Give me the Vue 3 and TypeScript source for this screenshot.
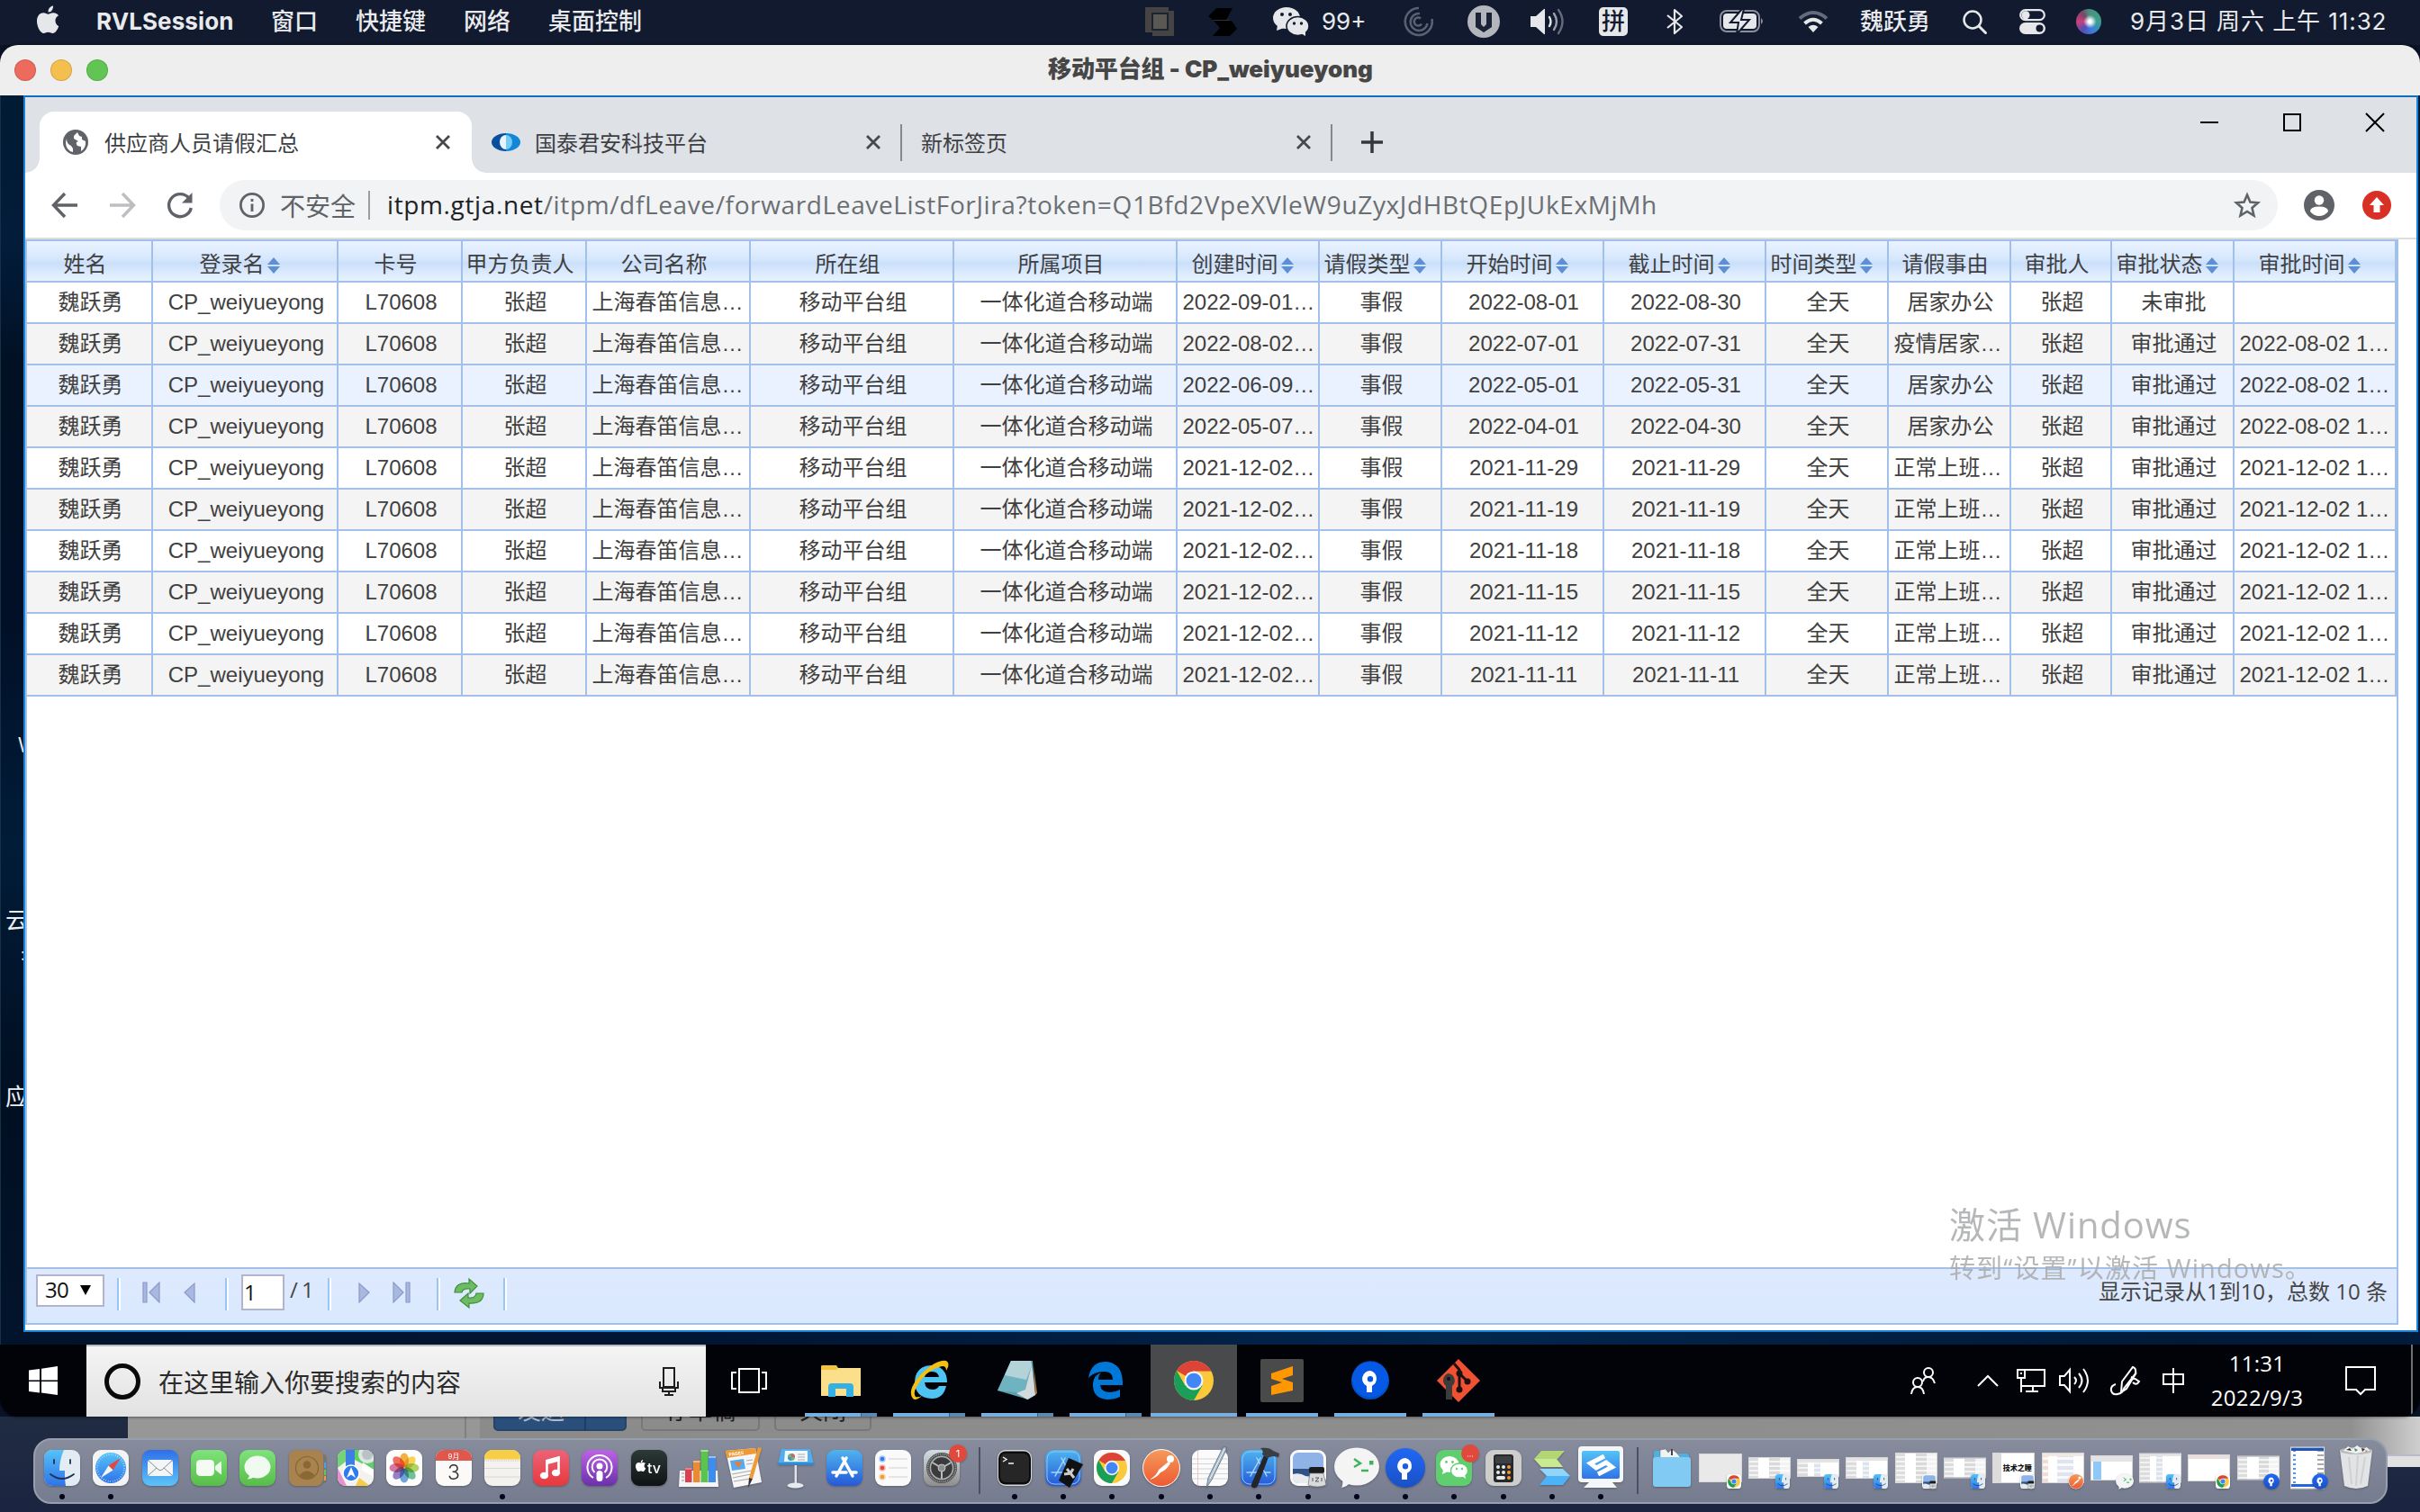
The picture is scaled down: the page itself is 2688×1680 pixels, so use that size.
<script setup lang="ts">
interface Column {
  title: string
  width: number
  sortable?: boolean
}
interface Thumb {
  w: number
  h: number
  badge: string
  kind: string
}

const columns: Column[] = [
  { title: '姓名', width: 140 },
  { title: '登录名', width: 206, sortable: true },
  { title: '卡号', width: 138 },
  { title: '甲方负责人', width: 138 },
  { title: '公司名称', width: 182 },
  { title: '所在组', width: 226 },
  { title: '所属项目', width: 248 },
  { title: '创建时间', width: 158, sortable: true },
  { title: '请假类型', width: 136, sortable: true },
  { title: '开始时间', width: 180, sortable: true },
  { title: '截止时间', width: 180, sortable: true },
  { title: '时间类型', width: 136, sortable: true },
  { title: '请假事由', width: 136 },
  { title: '审批人', width: 112 },
  { title: '审批状态', width: 136, sortable: true },
  { title: '审批时间', width: 180, sortable: true },
]
const gridColumns = columns.map((c) => c.width + 'px').join(' ')

const leaves: string[][] = [
  ['2022-09-01…', '2022-08-01', '2022-08-30', '居家办公', '未审批', ''],
  ['2022-08-02…', '2022-07-01', '2022-07-31', '疫情居家…', '审批通过', '2022-08-02 1…'],
  ['2022-06-09…', '2022-05-01', '2022-05-31', '居家办公', '审批通过', '2022-08-02 1…'],
  ['2022-05-07…', '2022-04-01', '2022-04-30', '居家办公', '审批通过', '2022-08-02 1…'],
  ['2021-12-02…', '2021-11-29', '2021-11-29', '正常上班…', '审批通过', '2021-12-02 1…'],
  ['2021-12-02…', '2021-11-19', '2021-11-19', '正常上班…', '审批通过', '2021-12-02 1…'],
  ['2021-12-02…', '2021-11-18', '2021-11-18', '正常上班…', '审批通过', '2021-12-02 1…'],
  ['2021-12-02…', '2021-11-15', '2021-11-15', '正常上班…', '审批通过', '2021-12-02 1…'],
  ['2021-12-02…', '2021-11-12', '2021-11-12', '正常上班…', '审批通过', '2021-12-02 1…'],
  ['2021-12-02…', '2021-11-11', '2021-11-11', '正常上班…', '审批通过', '2021-12-02 1…'],
]
const rows: string[][] = leaves.map(([created, start, end, reason, status, approved]) => [
  '魏跃勇', 'CP_weiyueyong', 'L70608', '张超', '上海春笛信息…', '移动平台组', '一体化道合移动端',
  created, '事假', start, end, '全天', reason, '张超', status, approved,
])

const tile = (fill: string) => `<rect width="40" height="40" rx="9" fill="${fill}"/>`
const chrome = (cx: number, cy: number, r: number) => `<g transform="translate(${cx} ${cy}) scale(${r / 20})">
  <circle r="20" fill="#fbc939"/>
  <path d="M0 0L-17.3 -10A20 20 0 0 1 17.3 -10L0 -10Z" fill="#db4437"/>
  <path d="M-17.3 -10A20 20 0 0 0 0 20L8.7 5L-8.7 5Z" fill="#1a9f59"/>
  <path d="M0 -10H17.3" stroke="#db4437" stroke-width="1"/>
  <circle r="9.6" fill="#f4f4f4"/><circle r="7.6" fill="#4285f4"/></g>`
const pin = `<path d="M20 9a9 9 0 0 0-4 17v7h6v-7.200a9 9 0 0 0-2-16.800zm0 6a3.200 3.200 0 1 1 0 6.400 3.200 3.200 0 0 1 0-6.400z" fill="#fff" fill-rule="evenodd"/>`
const strut = `<g stroke-linecap="round" fill="none"><path d="M22 9L11 29M18 9l11 20M7 25h15M27 25h6" /></g>`

const icons: Record<string, string> = {
  finder: `<clipPath id="cf"><rect width="40" height="40" rx="9"/></clipPath><g clip-path="url(#cf)"><rect width="40" height="40" fill="#e3ebf3"/><path d="M0 0h22q-5 11-5 23h6q-.5 9 1 17H0z" fill="url(#gBlue)"/></g><path d="M11 11v4M29 11v4" stroke="#1d3355" stroke-width="1.800" stroke-linecap="round"/><path d="M7 27q13 10 26 0" fill="none" stroke="#1d3355" stroke-width="1.800" stroke-linecap="round"/>`,
  safari: `${tile('#f4f4f4')}<circle cx="20" cy="20" r="17" fill="url(#gBlue)"/><circle cx="20" cy="20" r="15" fill="none" stroke="#cfe8fb" stroke-width="2" stroke-dasharray=".6 2"/><path d="M31 9L22.500 22.500 17.500 17.500z" fill="#e8463d"/><path d="M9 31L17.500 17.500 22.500 22.500z" fill="#f4f4f4"/>`,
  mail: `${tile('url(#gMail)')}<rect x="6" y="11" width="28" height="18" rx="3" fill="#f3f5f7"/><path d="M7 12l11 10q2 1.500 4 0l11-10M7 28l9-8M33 28l-9-8" fill="none" stroke="#8a9099" stroke-width="1"/>`,
  facetime: `${tile('url(#gGreen)')}<rect x="6" y="11" width="20" height="18" rx="4.500" fill="#f3fbf3"/><path d="M27 18l6-5q1-.5 1 .8v12.400q0 1.300-1 .8l-6-5z" fill="#eaf8ea"/>`,
  messages: `${tile('url(#gGreen)')}<ellipse cx="20" cy="19" rx="14.500" ry="12.500" fill="#f1faf0"/><path d="M11 27q0 4-2.500 5.500 5 0 8-3z" fill="#f1faf0"/>`,
  contacts: `<rect x="34" y="5" width="7" height="30" rx="2" fill="#777"/><path d="M39 14h2v6h-2z" fill="#4aa3e8"/><path d="M39 22h2v6h-2z" fill="#67c35b"/><path d="M39 29h2v5h-2z" fill="#e89c3c"/><rect width="38" height="40" rx="8" fill="#a9834f"/><circle cx="20" cy="20" r="12.500" fill="none" stroke="#86642f" stroke-width="1.200"/><circle cx="20" cy="16.500" r="4.300" fill="#8a6833"/><path d="M11.500 28q8.500-9 17 0-8.500 8-17 0z" fill="#8a6833"/>`,
  maps: `<clipPath id="cm"><rect width="40" height="40" rx="9"/></clipPath><g clip-path="url(#cm)"><rect width="40" height="40" fill="#f3f2ee"/><path d="M19 0h21v22L19 11z" fill="#62cf66"/><path d="M0 4v16l9-7V0H6z" fill="#74d376"/><circle cx="33" cy="5" r="10" fill="#dde6e2"/><circle cx="33" cy="5" r="6" fill="#b9c2c6"/><path d="M0 20v20h10z" fill="#e88fd0"/><path d="M20 40l4-9 12 9z" fill="#f8cb48"/><path d="M26 22l14 8v-8L28 14z" fill="#fff"/><path d="M9 0h10v22H9z" fill="#3b7fe4"/></g><circle cx="15" cy="26" r="9" fill="#2f7bf0" stroke="#fff" stroke-width="1.500"/><path d="M15 19l5 12-5-3.500L10 31z" fill="#fff"/>`,
  photos: `${tile('#fdfdfd')}<g opacity=".88">${['#f5a623', '#f4d03a', '#a8ce4b', '#5bb98b', '#5b9bd5', '#8a6fc4', '#d4668f', '#ee5b4b'].map((c, i) => `<ellipse cx="20" cy="11.500" rx="5" ry="8" fill="${c}" transform="rotate(${i * 45} 20 20)" style="mix-blend-mode:multiply"/>`).join('')}</g>`,
  calendar: `${tile('#fbfaf9')}<path d="M0 12V9a9 9 0 0 1 9-9h22a9 9 0 0 1 9 9v3z" fill="#e0574c"/><text x="20" y="9.500" font-size="8" text-anchor="middle" fill="#fff" font-family="Inter, 'Noto Sans CJK SC', sans-serif">9月</text><text x="20" y="33" font-size="23" text-anchor="middle" fill="#333" font-family="Inter, sans-serif" font-weight="300">3</text>`,
  notes: `${tile('#f4f2ee')}<path d="M0 10.500V9a9 9 0 0 1 9-9h22a9 9 0 0 1 9 9v1.500z" fill="#f8ce47"/><path d="M0 12h40" stroke="#c9c5bd" stroke-dasharray="1 1"/><path d="M0 20.500h40M0 30h40" stroke="#d4d0c9" stroke-width=".8"/>`,
  music: `${tile('url(#gRed)')}<path d="M15.500 28V12l13-3.500v17" fill="none" stroke="#fff" stroke-width="2.600"/><path d="M14.500 11.500l15-4v5l-15 4z" fill="#fff"/><ellipse cx="12.500" cy="28.500" rx="4.600" ry="3.800" fill="#fff"/><ellipse cx="25.500" cy="25.500" rx="4.600" ry="3.800" fill="#fff"/>`,
  podcasts: `${tile('url(#gPurple)')}<g fill="none" stroke="#fff" stroke-width="2"><path d="M13 31a13.500 13.500 0 1 1 14 0"/><path d="M14.500 25a8.300 8.300 0 1 1 11 0"/></g><circle cx="20" cy="18" r="3.500" fill="#fff"/><rect x="16.500" y="23" width="7" height="12" rx="3.500" fill="#fff"/>`,
  tv: `${tile('url(#gDark)')}<g transform="translate(5 12) scale(.48)"><path d="M20 12c0-4 3-5.500 3-5.500C21 4 18.500 4 17 4c-2 0-3.500 1.200-5 1.200S8.500 4 7 4C3 4 0 7.500 0 13c0 6 4 12 7 12 2 0 2.500-1.200 5-1.200S15 25 17 25c3 0 6-6 6.500-7.500C23 17.500 20 16 20 12zM16 2c1-1.500 1-3.500 1-4-2 0-5 2-5 6 2 0 3.500-1 4-2z" fill="#fff"/></g><text x="18" y="25.500" font-size="16" fill="#fff" font-family="Inter, sans-serif" font-weight="500">tv</text>`,
  numbers: `<path d="M0 23h42l1 18H-1z" fill="#f5f5f5"/><path d="M2 26h3M2 30h3M2 34h3" stroke="#999"/><rect x="6" y="20" width="7.500" height="16" fill="#d9434f"/><rect x="15" y="12" width="7.500" height="24" fill="#e98b35"/><rect x="23.500" y="0" width="8" height="36" fill="#5bc44f"/><rect x="32" y="7" width="8" height="29" fill="#3d8cf0"/><path d="M6 20h7.500v2H6z" fill="#ef7f86"/><path d="M15 12h7.500v2H15z" fill="#f7b878"/><path d="M23.500 0h8v2h-8z" fill="#a0e59a"/><path d="M32 7h8v2h-8z" fill="#8fc3fa"/>`,
  pages: `<path d="M-3 1L30-2l7 38-31 6z" fill="#f7f7f7"/><path d="M-3 1L30-2l1 6-33 5z" fill="#f09a37"/><text x="0" y="7" font-size="5" transform="rotate(-7)" fill="#fff" font-family="Inter, sans-serif" font-weight="700">PAGES</text><path d="M2 12l15-2 2 11-15 2z" fill="#55aaf5"/><path d="M6 14l9-1-3 7z" fill="#ee7b2e"/><path d="M20 12l7-1M20 16l7-1M4 27l22-4M5 31l20-4M6 35l18-3" stroke="#aaa" stroke-width="1.200"/><path d="M33-3l4 1L27 32l-4-1z" fill="#f09a37"/><path d="M23 31l4 1-5 10z" fill="#333"/>`,
  keynote: `<path d="M4-1h32l4 17H0z" fill="#53aeef"/><path d="M0 14h40v2.500H0z" fill="#2f8fdf"/><path d="M8 1h25v12H7z" fill="#f5f8fb"/><circle cx="15" cy="8" r="4" fill="#60c060"/><path d="M15 8V4a4 4 0 0 1 4 4z" fill="#e8508c"/><path d="M15 8h-4a4 4 0 0 0 4 4z" fill="#3e8ff0"/><path d="M22 5h8M22 8h8M22 11h8" stroke="#aaa"/><path d="M18.500 17h2.500v22h-2.500z" fill="#dfe3ea"/><ellipse cx="19.500" cy="39.500" rx="9" ry="3" fill="#e5eaf0"/>`,
  appstore: `${tile('url(#gStore)')}<g stroke="#fff" stroke-width="3.500">${strut}</g>`,
  reminders: `${tile('#fafafa')}<circle cx="8" cy="10" r="3" fill="#2f7bf0" stroke="#a9c9f8" stroke-width="1.500"/><circle cx="8" cy="20" r="3" fill="#e3493f" stroke="#f1b6b2" stroke-width="1.500"/><circle cx="8" cy="30" r="3" fill="#eb9c3e" stroke="#f6d5aa" stroke-width="1.500"/><path d="M15 10h21M15 20h21M15 30h21" stroke="#cfcfcf" stroke-width="1.200"/>`,
  settings: `${tile('url(#gGrey)')}<circle cx="20" cy="20" r="17" fill="#4a4b4c"/><circle cx="20" cy="20" r="15.500" fill="none" stroke="#a2a4a5" stroke-dasharray="1 .9" stroke-width="1.600"/><circle cx="20" cy="20" r="12.600" fill="#3a3b3c" stroke="#a9abac" stroke-width="1.600"/><path d="M20 20L9.500 14M20 20v12M20 20l10.500-6" stroke="#b9bbbc" stroke-width="2"/><circle cx="20" cy="20" r="4" fill="#8d8f90" stroke="#c4c6c7"/><circle cx="38" cy="4" r="10" fill="#e2493d"/><text x="38" y="8" font-size="11" text-anchor="middle" fill="#fff" font-family="Inter, sans-serif">1</text>`,
  terminal: `<rect x="1" width="38" height="40" rx="9" fill="#d7dadd"/><rect x="2" y="1.500" width="36" height="37" rx="8" fill="#0b0b0b"/><rect x="4" y="4" width="32" height="32" rx="6" fill="#262626"/><path d="M7 8l4 2.500L7 13M13 15h6" fill="none" stroke="#f4f4f4" stroke-width="1.400"/>`,
  simulator: `${tile('url(#gStore)')}<rect x="2" y="2" width="36" height="36" rx="8" fill="none" stroke="#8fc8f7"/><g stroke="#a7d5fa" stroke-width="1.500">${strut}</g><path d="M26 9l16 7-15 26-12-8z" fill="#111"/><path d="M24 21l8 10M31 21l-3 5-7 1" stroke="#ccc" stroke-width="3" fill="none"/>`,
  chrome: `${tile('#fafafa')}${chrome(20, 20, 17)}`,
  postman: `<circle cx="20" cy="20" r="21" fill="#fff"/><circle cx="20" cy="20" r="20" fill="url(#gOrange)"/><circle cx="30" cy="10" r="4" fill="#fff"/><path d="M28 13L17 22q-2 6-10 11 8-2 12-8 6-2 11-10z" fill="#fff"/>`,
  textedit: `${tile('#fbfbfb')}<path d="M0 10h40M0 15.500h40M0 21h40M0 26.500h40M0 32h40" stroke="#c9cbcd" stroke-width=".8"/><path d="M6.500 0v40" stroke="#f0b9b4" stroke-width=".8"/><path d="M34-2q2-2.500 4-1l0 3L22 33l-6 9 2-11z" fill="#a9bccb" stroke="#5c6d7a" stroke-width=".8"/><path d="M36-1L20 32" stroke="#eef4f8" stroke-width="1"/>`,
  xcode: `${tile('url(#gStore)')}<rect x="2" y="2" width="36" height="36" rx="8" fill="none" stroke="#8fc8f7"/><g stroke="#a7d5fa" stroke-width="1.500">${strut}</g><path d="M26 6l5 2-12 32q-2 3-5 2t-2-4z" fill="#23252a"/><path d="M22-2q10-1 14 3l7 3-1 4-6-1-7 2-5-4q2-4-2-7z" fill="#3a3d42"/>`,
  preview: `${tile('#fafafa')}<rect x="3" y="3" width="34" height="34" rx="6" fill="#8fb3e6"/><path d="M3 21h34v8H3z" fill="#2f5387"/><path d="M3 27q8-2 14 2t20 0v2a6 6 0 0 1-6 6H9a6 6 0 0 1-6-6z" fill="#e8ecef"/><rect x="21" y="19" width="17" height="7" rx="2" fill="#1b1b1b"/><path d="M22 26h15l3 13q-10 4-20 0z" fill="#d8dadb" stroke="#777" stroke-width=".7"/><path d="M25 35v-4M28 31h4l-4 4h4M35 31v4" stroke="#555" fill="none"/>`,
  script: `<ellipse cx="20" cy="18.500" rx="25" ry="21" fill="#f4f4f4"/><path d="M4 33q1 6-1 9 6-1 9-5z" fill="#f4f4f4"/><path d="M17 10l7 5-7 4" fill="none" stroke="#3cb55a" stroke-width="2.500"/><path d="M25 23h8" stroke="#3cb55a" stroke-width="2.500"/><rect x="34" y="12" width="4.500" height="4.500" fill="#3cb55a"/>`,
  sourcetree: `<circle cx="20" cy="20" r="22" fill="url(#gTree)"/>${pin}`,
  wechat: `${tile('#5fce6f')}<ellipse cx="15" cy="16" rx="10.500" ry="9" fill="#fff"/><path d="M8 22l-1 5 6-3z" fill="#fff"/><ellipse cx="26" cy="23" rx="9.500" ry="8" fill="#fff" stroke="#5fce6f" stroke-width="1.300"/><path d="M29 29l4 3-1-5z" fill="#fff"/><g fill="#5fce6f"><circle cx="11.500" cy="13.500" r="1.400"/><circle cx="18.500" cy="13.500" r="1.400"/><circle cx="23" cy="21" r="1.200"/><circle cx="29" cy="21" r="1.200"/></g><circle cx="38" cy="4" r="10" fill="#e2493d"/><g fill="#f6c9c5"><circle cx="35.500" cy="7" r=".7"/><circle cx="38" cy="7" r=".7"/><circle cx="40.500" cy="7" r=".7"/></g>`,
  calculator: `${tile('#cdcdcb')}<rect x="9" y="5" width="22" height="31" rx="3" fill="#26282b"/><rect x="11" y="7" width="18" height="8" rx="1" fill="#3c3f43"/><g fill="#e9e9e9"><circle cx="14" cy="19" r="2"/><circle cx="20" cy="19" r="2"/><circle cx="14" cy="25" r="2"/><circle cx="20" cy="25" r="2"/><rect x="12" y="29" width="10" height="4" rx="2"/></g><g fill="#f29a38"><circle cx="26" cy="19" r="2"/><circle cx="26" cy="25" r="2"/><circle cx="26" cy="31" r="2"/></g>`,
  stack: `<path d="M8 1h26l-8 9H0z" fill="#b3d574"/><path d="M0 10h25l7 9H8z" fill="#c8ea92"/><path d="M6 21h26l8 8H14z" fill="#8fd6fa"/><path d="M14 29h26l-8 10H6z" fill="#4db2f7"/>`,
  remote: `<rect x="-5" y="-4" width="50" height="40" rx="4" fill="#f5f6f7"/><rect x="-1" y="1" width="42" height="31" rx="2" fill="url(#gBlue)"/><path d="M7 36h26l5 6H1z" fill="#f5f6f7"/><path d="M24 7L8.500 15l6.500 5 11-6 6.500 5L17 27" fill="none" stroke="#fff" stroke-width="5"/>`,
  folder: `<path d="M0 4q0-3 3-3h9l3 3h21q3 0 3 3v6H0z" fill="#4fb0e2"/><path d="M7 9V0l6-1 3 4 4-4 5 4 5 6z" fill="#f0f2f4" stroke="#777" stroke-width=".6"/><path d="M19-1h2v7h-2z" fill="#444"/><rect x="-1" y="8" width="42" height="33" rx="3" fill="#81caf4"/>`,
}
const leftDock = ['finder', 'safari', 'mail', 'facetime', 'messages', 'contacts', 'maps', 'photos', 'calendar', 'notes', 'music', 'podcasts', 'tv', 'numbers', 'pages', 'keynote', 'appstore', 'reminders', 'settings']
const running = new Set(['finder', 'safari', 'notes'])
const midDock = ['terminal', 'simulator', 'chrome', 'postman', 'textedit', 'xcode', 'preview', 'script', 'sourcetree', 'wechat', 'calculator', 'stack', 'remote']
const thumbs: Thumb[] = [
  { w: 48, h: 32, badge: 'chrome', kind: 'blank' },
  { w: 47, h: 24, badge: 'finder', kind: 'split' },
  { w: 47, h: 20, badge: 'finder', kind: 'list' },
  { w: 47, h: 24, badge: 'finder', kind: 'list' },
  { w: 47, h: 34, badge: 'preview', kind: 'split' },
  { w: 47, h: 23, badge: 'finder', kind: 'split' },
  { w: 47, h: 34, badge: 'preview', kind: 'book' },
  { w: 47, h: 34, badge: 'postman', kind: 'api' },
  { w: 47, h: 28, badge: 'script', kind: 'code' },
  { w: 47, h: 33, badge: 'finder', kind: 'list' },
  { w: 47, h: 30, badge: 'chrome', kind: 'web' },
  { w: 47, h: 27, badge: 'sourcetree', kind: 'split' },
  { w: 38, h: 47, badge: 'sourcetree', kind: 'tall' },
]

const taskIcons: Record<string, string> = {
  explorer: `<g transform="translate(-2 2)"><path d="M0 3q0-2 2-2h13l3 3h26v31H0z" fill="#fbdf8b"/><path d="M0 3q0-2 2-2h15l2 3-2 2H0z" fill="#f5c33b"/><path d="M8 36V25q0-4 4-4h20q4 0 4 4v11h-8v-9H16v9z" fill="#36b0e4"/></g>`,
  ie: `<g transform="translate(-2 0)"><path d="M42 22H17q1 8 9 8 5 0 7-4h8q-3 14-16 14Q6 39 6 21 7 4 24 3q18 1 18 19zM17 16h16q-1-6-8-6-7 0-8 6z" fill="#4fc4f3"/><path d="M4 40Q-3 31 12 14 30-4 41-2q5 3 0 11 0-7-8-4Q18 9 8 27q-4 7-1 11 3 1 7-1-7 6-10 3z" fill="#f5c016"/></g>`,
  notepad: `<g transform="translate(-2 0)"><path d="M15-2h24l3 38-8 5L0 31z" fill="#5c9fae"/><path d="M15-2h22l1 6-8 30L0 31z" fill="#6fb3c1"/><path d="M15-2h22l1 5-6 16-24-5z" fill="#b4d3d9"/><path d="M38 3l4 33-9 5-12-7 10-4z" fill="#d3dadd"/><path d="M40 3l4 31-2 2z" fill="#a87c3f"/></g>`,
  edge: `<path d="M1 17Q4-1 20-1q18 1 19 22v4H14q1 8 11 8 6 0 11-3v8q-6 3-14 3Q5 40 6 23q1-9 9-12-3 3-3 8h16q0-9-9-9-12 0-18 7z" fill="#0078d7"/>`,
  chrome: chrome(20, 20, 22),
  sublime: `<rect x="-4" y="-4" width="48" height="48" rx="2" fill="#4a4a4a"/><path d="M8 12l24-8v10l-12 4 12 4v9L8 36V26l12-4-12-4z" fill="#ff9800"/>`,
  sourcetree: `<circle cx="20" cy="20" r="21" fill="#0052cc"/><circle cx="20" cy="18" r="20" fill="#0a5ff5" opacity=".6"/>${pin}`,
  git: `<path d="M20-4l24 24-24 24L-4 20z" fill="#f05133"/><path d="M15 1l6 7v22M21 12l9 9" stroke="#1b1110" stroke-width="3" fill="none"/><circle cx="21" cy="12" r="3.500" fill="#1b1110"/><circle cx="21" cy="30" r="3.500" fill="#1b1110"/><circle cx="30" cy="21" r="3.500" fill="#1b1110"/><path d="M9 12a8 8 0 0 0-3 14v15h7V26A8 8 0 0 0 9 12z" fill="#3c3c3c"/><circle cx="9" cy="18" r="2" fill="#111"/>`,
}
const tasks = [
  { id: 'explorer', multi: true },
  { id: 'ie', multi: true },
  { id: 'notepad', multi: true },
  { id: 'edge', multi: true },
  { id: 'chrome', active: true },
  { id: 'sublime' },
  { id: 'sourcetree' },
  { id: 'git' },
]
</script>

<template>
  <div class="screen">
    <svg class="defs" width="0" height="0">
      <defs>
        <linearGradient id="gBlue" x2="0" y2="1"><stop stop-color="#55c3f8" /><stop offset="1" stop-color="#2f73e8" /></linearGradient>
        <linearGradient id="gMail" x2="0" y2="1"><stop stop-color="#2f6fe8" /><stop offset="1" stop-color="#5cc4f8" /></linearGradient>
        <linearGradient id="gGreen" x2="0" y2="1"><stop stop-color="#7fe27c" /><stop offset="1" stop-color="#57bd48" /></linearGradient>
        <linearGradient id="gRed" x2="0" y2="1"><stop stop-color="#ea6478" /><stop offset="1" stop-color="#e8383d" /></linearGradient>
        <linearGradient id="gPurple" x2="0" y2="1"><stop stop-color="#bd63e6" /><stop offset="1" stop-color="#6b30aa" /></linearGradient>
        <linearGradient id="gDark" x2="0" y2="1"><stop stop-color="#2c3a36" /><stop offset="1" stop-color="#101214" /></linearGradient>
        <linearGradient id="gStore" x2="0" y2="1"><stop stop-color="#4fb4ee" /><stop offset="1" stop-color="#2559d8" /></linearGradient>
        <linearGradient id="gGrey" x2="0" y2="1"><stop stop-color="#d3dee4" /><stop offset="1" stop-color="#8f8d8a" /></linearGradient>
        <linearGradient id="gOrange" x2="0" y2="1"><stop stop-color="#f59a5a" /><stop offset="1" stop-color="#ee5a32" /></linearGradient>
        <linearGradient id="gTree" x2="0" y2="1"><stop stop-color="#2068f5" /><stop offset="1" stop-color="#1a50c4" /></linearGradient>
      </defs>
    </svg>

    <header class="menubar">
      <div class="menu-left">
        <svg class="apple" viewBox="0 0 26 32"><path d="M21.500 17c0-4 3.300-5.500 3.500-5.700-2-2.800-5-3-6-3-2.500 0-4.300 1.400-5.500 1.400S10.500 8.300 8.300 8.300C4.500 8.300 1 11.500 1 17.500 1 24 5.200 31 8.500 31c2 0 2.800-1.200 5-1.200S16.500 31 18.500 31c3 0 5.700-4.500 6.800-8-.2 0-3.800-1.600-3.800-6zM17.500 5.800C19 4 19.200 1.500 19 .5c-2 0-5.500 2-5.500 7 2 .1 3.300-.7 4-1.700z" /></svg>
        <b>RVLSession</b><span>窗口</span><span>快捷键</span><span>网络</span><span>桌面控制</span>
      </div>
      <div class="menu-right">
        <svg style="width: 32px" viewBox="0 0 32 32"><path d="M0 0h26v4h6v28H8v-4H0z" fill="#454442" /><rect x="8" y="7" width="17" height="18" fill="#5a5854" stroke="#1c2232" stroke-width="2" /></svg>
        <svg style="width: 32px; margin-left: 38px" viewBox="0 0 32 32"><path d="M9 1h18l-7 13H5L0 10zM6 15h20l6 9-8 8H5l8-9z" /><path d="M6 14.500h18" stroke="#2a3142" /></svg>
        <svg style="width: 40px; margin-left: 40px" viewBox="0 0 40 32"><ellipse cx="15" cy="12" rx="15" ry="12" fill="#e6e7ea" /><path d="M5 20l-1 6 8-3z" fill="#e6e7ea" /><ellipse cx="27.500" cy="21" rx="12.500" ry="10.500" fill="#e6e7ea" stroke="#111a2e" stroke-width="1.600" /><path d="M31 29l5 3v-6z" fill="#e6e7ea" /><g fill="#111a2e"><circle cx="10" cy="8" r="2" /><circle cx="19" cy="8" r="2" /><circle cx="23.500" cy="18" r="1.700" /><circle cx="31.500" cy="18" r="1.700" /></g></svg>
        <span class="m99">99+</span>
        <svg style="width: 32px; margin-left: 44px" viewBox="0 0 32 32"><g fill="none" stroke="#596073" stroke-width="2.600"><path d="M16 1a15 15 0 1 0 14.500 12" /><path d="M17 7a9.500 9.500 0 1 0 8.500 11" /><path d="M18 12.500a4.500 4.500 0 1 0 1 6" /></g></svg>
        <svg style="width: 36px; margin-left: 38px" viewBox="0 0 36 36"><circle cx="18" cy="18" r="18" fill="#b3b6bd" /><path d="M9 8h6v13l3 3 3-3V8h6v16l-9 6-9-6z" fill="#1b2338" /></svg>
        <svg style="width: 38px; margin-left: 34px" viewBox="0 0 38 30"><path d="M0 9h6l9-8q1-.5 1 .6v26.800q0 1.100-1 .6L6 21H0z" fill="#e6e7ea" /><g fill="none" stroke-width="2.400" stroke-linecap="round"><path d="M21 10q3 5 0 10" stroke="#e6e7ea" /><path d="M26 6q6 9 0 18" stroke="#9ba0ab" /><path d="M31 2q9 13 0 26" stroke="#646b7c" /></g></svg>
        <span class="pin">拼</span>
        <svg style="width: 18px; margin-left: 43px" viewBox="0 0 18 28"><path d="M1 7l16 13-8 7V1l8 7L1 21" fill="none" stroke="#e6e7ea" stroke-width="2.200" stroke-linejoin="round" /></svg>
        <svg style="width: 50px; margin-left: 41px" viewBox="0 0 50 26"><rect x="1" y="1" width="43" height="23" rx="7" fill="none" stroke="#8b909c" stroke-width="2" /><rect x="4" y="4" width="37" height="17" rx="4" fill="#e6e7ea" /><path d="M46 9q4 3.500 0 7z" fill="#8b909c" /><path d="M25-1L12 14h9l-2 13 14-16h-9l3-12z" fill="#e6e7ea" stroke="#111a2e" stroke-width="2" /></svg>
        <svg style="width: 34px; margin-left: 37px" viewBox="0 0 34 24"><g fill="none" stroke-width="4"><path d="M2 8.500q15-13 30 0" stroke="#646b7c" /><path d="M7.500 14q9.500-8.500 19 0" stroke="#e6e7ea" /></g><path d="M11.500 18q5.500-4.500 11 0L17 24z" fill="#e6e7ea" /></svg>
        <span style="margin-left: 35px">魏跃勇</span>
        <svg style="width: 27px; margin-left: 36px" viewBox="0 0 27 27"><circle cx="11" cy="11" r="9.500" fill="none" stroke="#e6e7ea" stroke-width="2.500" /><path d="M18 18l7.500 7.500" stroke="#e6e7ea" stroke-width="3" stroke-linecap="round" /></svg>
        <svg style="width: 29px; margin-left: 36px" viewBox="0 0 29 28"><rect x="1.200" y="1.200" width="26.600" height="11" rx="5.500" fill="none" stroke="#e6e7ea" stroke-width="2.200" /><circle cx="7" cy="6.700" r="4.500" fill="#e6e7ea" /><rect y="15" width="29" height="13" rx="6.500" fill="#e6e7ea" /><circle cx="22.500" cy="21.500" r="4" fill="#111a2e" /></svg>
        <i class="siri"></i>
        <span class="date">9月3日 周六 上午 11:32</span>
      </div>
    </header>

    <main class="macwin">
      <div class="titlebar">
        <div class="lights"><i class="r"></i><i class="y"></i><i class="g"></i></div>
        <b>移动平台组 - CP_weiyueyong</b>
      </div>
      <div class="remote">
        <div class="wall-left">
          <span style="top: 703px; left: 19px; font-size: 24px">W</span>
          <span style="top: 898px; left: 5px">云</span>
          <span style="top: 936px; left: 22px; font-size: 18px">:</span>
          <span style="top: 1094px; left: 5px">应</span>
        </div>
        <div class="browser">
          <div class="tabs">
            <div class="tab on">
              <svg class="fav" viewBox="0 0 28 28"><circle cx="14" cy="14" r="14" fill="#5f6368" /><path d="M4 10q0 6 5 8l2 3v4Q3 23 3 14zM16 3l-4 4v3l5 3q-4 1-1 5l4 1v5q6-4 5-11l-4-2v-3l-3-1z" fill="#fff" /></svg>
              <span>供应商人员请假汇总</span>
              <svg class="x" viewBox="0 0 16 16"><path d="M1 1l14 14M15 1L1 15" /></svg>
            </div>
            <div class="tab">
              <svg class="fav2" viewBox="0 0 32 20"><path d="M16 0A16 10 0 0 0 16 20z" fill="#0a4f9e" /><path d="M16 0A16 10 0 0 1 16 20z" fill="#1286d8" /><path d="M16 2a7 8 0 0 0 0 16z" fill="#e8f3fb" /><path d="M16 2a7 8 0 0 1 0 16z" fill="#74cbf4" /></svg>
              <span>国泰君安科技平台</span>
              <svg class="x" viewBox="0 0 16 16"><path d="M1 1l14 14M15 1L1 15" /></svg>
            </div>
            <div class="tab plain">
              <span>新标签页</span>
              <svg class="x" viewBox="0 0 16 16"><path d="M1 1l14 14M15 1L1 15" /></svg>
            </div>
            <svg class="plus" viewBox="0 0 24 24"><path d="M12 0v24M0 12h24" /></svg>
            <div class="wctl">
              <svg viewBox="0 0 20 20"><path d="M0 10h20" /></svg>
              <svg viewBox="0 0 20 20"><rect x="1" y="1" width="18" height="18" /></svg>
              <svg viewBox="0 0 20 20"><path d="M0 0l20 20M20 0L0 20" /></svg>
            </div>
          </div>
          <div class="toolbar">
            <svg class="nav" viewBox="0 0 28 28"><path d="M28 14H2M14 1L1.500 14 14 27" /></svg>
            <svg class="nav dim" viewBox="0 0 28 28"><path d="M0 14h26M14 1l12.500 13L14 27" /></svg>
            <svg class="nav reload" viewBox="0 0 28 28"><path d="M24 6.500A12.500 12.500 0 1 0 26.300 17" /><path d="M27.500 0v11.500H16z" class="fill" /></svg>
            <div class="omni">
              <svg class="info" viewBox="0 0 28 28"><circle cx="14" cy="14" r="12.600" /><path d="M14 12.500V21M14 7v3" /></svg>
              <span class="unsafe">不安全</span><i></i>
              <span class="url"><em>itpm.gtja.net</em>/itpm/dfLeave/forwardLeaveListForJira?token=Q1Bfd2VpeXVleW9uZyxJdHBtQEpJUkExMjMh</span>
              <svg class="star" viewBox="0 0 28 28"><path d="M14 2.500l3.400 8 8.600.8-6.500 5.700 2 8.500-7.500-4.500-7.500 4.500 2-8.500L2 11.300l8.600-.8z" /></svg>
            </div>
            <svg class="avatar" viewBox="0 0 34 34"><circle cx="17" cy="17" r="17" fill="#5f6368" /><circle cx="17" cy="11.500" r="5.200" fill="#fff" /><path d="M7 24q0-5.500 10-5.500T27 24q-4 5-10 5T7 24z" fill="#fff" /></svg>
            <svg class="update" viewBox="0 0 32 32"><circle cx="16" cy="16" r="16" fill="#d93025" /><path d="M16 7l8 9h-4.500v8h-7v-8H8z" fill="#fff" /></svg>
          </div>
          <div class="page">
            <div class="grid">
              <div class="row head" :style="{ gridTemplateColumns: gridColumns }">
                <div v-for="c in columns" :key="c.title" class="cell">
                  <span>{{ c.title }}</span>
                  <svg v-if="c.sortable" class="sort" viewBox="0 0 14 18"><path d="M7 0l7 8H0zM0 10h14l-7 8z" /></svg>
                </div>
              </div>
              <div v-for="(r, i) in rows" :key="i" class="row" :class="{ alt: i % 2 === 1, hover: i === 2 }" :style="{ gridTemplateColumns: gridColumns }">
                <div v-for="(v, j) in r" :key="j" class="cell" :class="{ long: v.endsWith('…') }">{{ v }}</div>
              </div>
              <div class="empty"></div>
              <div class="pager">
                <div class="size">30<svg viewBox="0 0 12 11"><path d="M0 0h12L6 11z" /></svg></div>
                <s style="margin-left: 14px"></s>
                <svg style="width: 20px; margin-left: 24px" viewBox="0 0 20 24"><path d="M1 1h4v22H1zM19 1v22L8 12z" /></svg>
                <svg style="width: 13px; margin-left: 26px" viewBox="0 0 13 24"><path d="M12 2v21L1 12z" /></svg>
                <s style="margin-left: 33px"></s>
                <div class="num">1</div>
                <span class="of">/ 1</span>
                <s style="margin-left: 17px"></s>
                <svg style="width: 13px; margin-left: 30px" viewBox="0 0 13 24"><path d="M1 2v21l11-11z" /></svg>
                <svg style="width: 20px; margin-left: 25px" viewBox="0 0 20 24"><path d="M1 1v22l11-11zM15 1h4v22h-4z" /></svg>
                <s style="margin-left: 29px"></s>
                <svg class="refresh" viewBox="0 0 34 32"><path d="M1 15Q2 3 17 5V0l9 8-8 8v-5q-8-1-9 4z" /><path d="M33 16q0 12-16 11v5l-10-8 9-8v5q8 1 9-5z" /></svg>
                <s style="margin-left: 21px"></s>
                <span class="total">显示记录从1到10，总数 10 条</span>
              </div>
            </div>
            <div class="watermark"><p>激活 Windows</p><p>转到“设置”以激活 Windows。</p></div>
          </div>
        </div>
      </div>
      <div class="taskbar">
        <div class="start"><svg viewBox="0 0 32 32"><path d="M0 4.500L12 3v12.500H0zM14 2.700L32 0v15.500H14zM0 17h12v12.500L0 28zM14 17h18v15l-18-2.500z" fill="#fff" /></svg></div>
        <div class="search">
          <i></i><span>在这里输入你要搜索的内容</span>
          <svg viewBox="0 0 22 32"><path d="M5 1h12v21H5zM1 16v7h20v-7M4 23v4h14v-4M11 27v4M6 31h10" /></svg>
        </div>
        <svg class="views" viewBox="0 0 40 28"><path d="M9 1h22v26H9zM6 5H1v18h5M34 5h5v18h-5" /></svg>
        <div class="tasks">
          <div v-for="t in tasks" :key="t.id" class="task" :class="{ active: t.active, multi: t.multi }">
            <svg viewBox="0 0 40 40" v-html="taskIcons[t.id]"></svg>
          </div>
        </div>
        <div class="tray">
          <svg style="width: 30px" viewBox="0 0 30 30"><circle cx="21" cy="6" r="5" /><circle cx="9" cy="17" r="5" /><path d="M15 16q1-5 6-5t7 7M2 30q1-8 7-8t7 8" /></svg>
          <svg style="width: 24px; margin-left: 45px" viewBox="0 0 24 14"><path d="M1 13L12 2l11 11" /></svg>
          <svg style="width: 32px; margin-left: 20px" viewBox="0 0 32 28"><path d="M9 2h22v18H5M1 2h8v9H1zM5 11v16M18 20v6M10 26h14M4 6h2" /></svg>
          <svg style="width: 34px; margin-left: 15px" viewBox="0 0 34 28"><path d="M1 9h5l6-7v24l-6-7H1zM17 10q4 4 0 8M22 6q7 8 0 16M27 1q10 13 0 26" /></svg>
          <svg style="width: 34px; margin-left: 22px" viewBox="0 0 34 32"><path d="M7 20q-6 2-5 7t7 4 7-6l13-17q1-6-3-7L14 17l-1 12 6-4L30 7M24 12q6 2 9 5-3 5-7 1" /></svg>
          <svg style="width: 24px; margin-left: 25px" viewBox="0 0 24 28"><path d="M1 7h22v11H1zM12 0v28" /></svg>
          <div class="clock"><span>11:31</span><span>2022/9/3</span></div>
          <svg style="width: 34px; margin-left: 42px" viewBox="0 0 34 32"><path d="M1 1h32v25H22l-5 5-5-5H1z" /></svg>
          <i></i>
        </div>
      </div>
    </main>

    <footer class="behind">
      <div class="backpane">
        <div class="btn blue"><span>发送</span><u></u></div>
        <div class="btn b2"><span>存草稿</span></div>
        <div class="btn b3"><span>关闭</span></div>
      </div>
      <div class="dock">
        <div v-for="n in leftDock" :key="n" class="slot">
          <svg viewBox="0 0 40 40" v-html="icons[n]"></svg><i v-if="running.has(n)"></i>
        </div>
        <hr />
        <div v-for="n in midDock" :key="n" class="slot"><svg viewBox="0 0 40 40" v-html="icons[n]"></svg><i></i></div>
        <hr />
        <div class="slot"><svg viewBox="0 0 40 40" v-html="icons.folder"></svg></div>
        <div v-for="(t, i) in thumbs" :key="i" class="slot">
          <div class="thumb" :class="t.kind" :style="{ width: t.w + 'px', height: t.h + 'px' }"><b v-if="t.kind === 'book'">技术之瞳</b></div>
          <svg class="badge" viewBox="0 0 40 40" v-html="icons[t.badge]"></svg>
        </div>
        <div class="slot">
          <svg viewBox="0 0 40 40"><path d="M2 0h36l-5 40q-13 6-26 0z" fill="#e2e3e4" /><path d="M12 8l3 30M22 6l-2 34M30 8l-5 30" stroke="#cfd0d1" stroke-width="2" /><ellipse cx="20" cy="1" rx="18" ry="4" fill="#b9bcbe" /><path d="M6 1l5-5 5 3 5-4 6 4 5-2 3 4-15 3z" fill="#f1f1f1" /><path d="M9 0l4-2 2 3zM26-2l4 1-3 3z" fill="#333" /><path d="M18-2l4 2-3 2z" fill="#3c8f7a" /><path d="M30 0l3 1-2 2z" fill="#d4803a" /></svg>
        </div>
      </div>
    </footer>
  </div>
</template>

<style>
body { margin: 0; overflow: hidden; }
</style>
<style scoped>
.screen { width: 2688px; height: 1680px; display: flex; flex-direction: column; position: relative; overflow: hidden; background: #0a1226; font-family: "Open Sans", "Noto Sans CJK SC", sans-serif; box-sizing: border-box; }
.screen *, .screen *::before, .screen *::after { box-sizing: border-box; }
.defs { position: absolute; }
svg { display: block; overflow: visible; flex: none; }
span, b { white-space: nowrap; }

.menubar { height: 50px; flex: none; background: #111a2e; display: flex; justify-content: space-between; color: #e9eaed; font: 500 26px/48px Inter, "Noto Sans CJK SC", sans-serif; }
.menu-left, .menu-right { display: flex; align-items: center; height: 48px; }
.menu-left { padding-left: 40px; }
.menu-left span { margin-left: 42px; padding-bottom: 1px; }
.menu-left b { margin-left: 41px; font-weight: 700; width: 152px; letter-spacing: .1px; padding-bottom: 1px; }
.apple { width: 26px; fill: #e6e7ea; margin-bottom: 4px; }
.menu-right { padding-right: 34px; }
.m99 { margin-left: 14px; width: 48px; font-weight: 400; }
.pin { margin-left: 38px; width: 32px; height: 32px; line-height: 31px; border-radius: 5px; background: #e6e7ea; color: #111a2e; text-align: center; }
.siri { width: 28px; height: 28px; border-radius: 50%; margin-left: 34px; background: radial-gradient(circle at 55% 50%, #fff 0 8%, transparent 35%), conic-gradient(#4b8f7d, #3aa08d 25%, #3b7be0 45%, #5a4bb0 60%, #c7427a 75%, #7a4468 90%, #4b8f7d); }
.date { margin-left: 32px; width: 288px; letter-spacing: .92px; font-weight: 400; padding-bottom: 1px; }

.macwin { height: 1524px; flex: none; display: flex; flex-direction: column; border-radius: 20px; overflow: hidden; position: relative; z-index: 1; box-shadow: 0 0 3px 1px #0006; }
.titlebar { height: 56px; flex: none; background: #eee; position: relative; display: flex; align-items: center; justify-content: center; color: #464646; font: 700 26px/54px Inter, "Noto Sans CJK SC", sans-serif; }
.titlebar b { width: 360px; letter-spacing: -.1px; padding-bottom: 3px; }
.lights { position: absolute; left: 16px; top: 16px; display: flex; gap: 16px; }
.lights i { width: 24px; height: 24px; border-radius: 50%; border: 1px solid #0002; }
.r { background: #ed6a5e; } .y { background: #f5bf4f; } .g { background: #61c554; }
.remote { height: 1388px; display: flex; flex: none; background: linear-gradient(90deg, #02132b, #011634 30%, #02264d 60%, #011a38 90%, #011b3c); padding-right: 2px; }
.wall-left { width: 26px; height: 1388px; position: relative; overflow: hidden; background: linear-gradient(#011b33, #021c3a 12%, #011022 22%, #011027 42%, #011c38 60%, #010f22 80%, #02142c); border-left: 1px solid #16304a; }
.wall-left span { position: absolute; color: #eee; font-size: 26px; line-height: 36px; }

.browser { width: 2660px; height: 1374px; border: 2px solid #1883d7; border-top-color: #0f6fbd; display: flex; flex-direction: column; background: #fff; }
.tabs { height: 84px; flex: none; background: #dee1e6; padding: 16px 0 0 16px; display: flex; color: #3c4043; font-size: 24px; position: relative; }
.tab { position: relative; display: flex; align-items: center; height: 68px; width: 478px; padding: 0 24px 0 25px; }
.tab.on { background: #fff; border-radius: 16px 16px 0 0; width: 480px; padding-left: 26px; }
.tab.on::before, .tab.on::after { content: ""; position: absolute; bottom: 0; width: 16px; height: 16px; }
.tab.on::before { left: -16px; background: radial-gradient(circle at 0 0, transparent 15.500px, #fff 16px); }
.tab.on::after { right: -16px; background: radial-gradient(circle at 100% 0, transparent 15.500px, #fff 16px); }
.tab span { margin-left: 18px; padding-bottom: 2px; }
.tab:not(.on)::after { content: ""; position: absolute; right: 0; top: 14px; width: 2px; height: 41px; background: #85888d; }
.tab:not(.on, .plain) { padding-left: 22px; }
.tab.plain { padding-left: 21px; }
.tab.plain span { margin-left: 0; }
.fav { width: 28px; } .fav2 { width: 32px; } .fav2 + span { margin-left: 16px; }
.x { width: 16px; margin-left: auto; stroke: #45494d; stroke-width: 2.800; }
.plus { width: 24px; height: 24px; margin: 22px 0 0 32px; align-self: flex-start; stroke: #35383b; stroke-width: 3.500; }
.wctl { margin-left: auto; display: flex; gap: 72px; padding: 2px 36px 0 0; }
.wctl svg { width: 20px; height: 20px; fill: none; stroke: #000; stroke-width: 2; }
.toolbar { height: 74px; flex: none; padding: 8px 28px 0 30px; display: flex; border-bottom: 2px solid #dcdde0; }
.toolbar > svg { margin-top: 14px; }
.nav { width: 28px; height: 28px; fill: none; stroke: #5f6368; stroke-width: 3.400; margin-right: 36px; }
.nav.dim { stroke: #bcbec1; }
.nav.reload { margin-right: 30px; }
.nav .fill { fill: #5f6368; stroke: none; }
.omni { width: 2286px; height: 56px; border-radius: 28px; background: #f1f3f4; display: flex; align-items: center; padding: 0 20px 0 22px; font-size: 28px; color: #5f6368; }
.info { width: 28px; fill: none; stroke: #5f6368; stroke-width: 2.800; }
.unsafe { margin-left: 17px; width: 86px; padding-bottom: 1px; }
.omni i { width: 2px; height: 32px; background: #9a9da1; margin-left: 12px; }
.url { margin-left: 19px; color: #6b6f74; letter-spacing: .63px; padding-bottom: 2px; }
.url em { font-style: normal; color: #202124; }
.star { width: 28px; margin-left: auto; fill: none; stroke: #5f6368; stroke-width: 2.600; }
.avatar { width: 34px; height: 34px; margin: 11px 0 0 29px !important; }
.update { width: 32px; height: 32px; margin: 12px 0 0 auto !important; }

.page { height: 1212px; position: relative; background: #fff; }
.grid { width: 2636px; height: 1206px; border: 2px solid #a3c0e8; display: flex; flex-direction: column; font: 24px/44px "Liberation Sans", "Noto Sans CJK SC", sans-serif; color: #404040; }
.row { display: grid; height: 46px; flex: none; border-bottom: 2px solid #a3c0e8; background: #fff; }
.row.alt { background: #f4f4f4; }
.row.hover { background: #eaf2ff; }
.cell { border-right: 2px solid #a3c0e8; padding-left: 3px; text-align: center; white-space: nowrap; overflow: hidden; height: 44px; line-height: 43px; }
.cell.long { text-align: left; padding-left: 5.500px; }
.head { background: linear-gradient(#eaf3ff, #d6e7fd 45%, #cadffa 55%, #e6f1ff 95%); }
.head .cell { display: flex; justify-content: center; align-items: center; padding: 8px 9px 0 0; line-height: 36px; overflow: visible; }
.sort { width: 14px; height: 18px; margin: 1px 3px 0 3px; fill: #5e8fd3; }
.empty { flex: 1; }
.pager { height: 62px; border-top: 2px solid #a3c0e8; flex: none; display: flex; padding: 0 10px; background: linear-gradient(#dee9fd, #d9e9ff); font-family: "Open Sans", "Noto Sans CJK SC", sans-serif; color: #444; align-items: flex-start; }
.size { width: 76px; height: 36px; margin-top: 6px; border: 2px solid #b0b4cc; background: #fff; color: #111; line-height: 29px; padding-left: 8px; display: flex; letter-spacing: -.6px; }
.size svg { width: 12px; height: 11px; margin: 10px 0 0 13px; }
.pager s { width: 4px; height: 36px; margin-top: 10px; background: linear-gradient(90deg, #99c6f8 50%, #fff 50%); }
.pager > svg { margin-top: 14px; fill: #a9b8e0; stroke: #8c9ac6; stroke-width: 1.200; }
.num { width: 48px; height: 40px; margin: 6px 0 0 14px; border: 2px solid #b0b4cc; background: #fff; line-height: 35px; padding-left: 1px; color: #111; }
.of { margin: 1px 0 0 6px; width: 25px; line-height: 44px; letter-spacing: -1px; }
.pager .refresh { width: 34px; margin: 11px 0 0 15px; fill: #6dbb62; stroke: #3f8f3c; }
.total { margin-left: auto; line-height: 49px; }
.watermark { position: absolute; left: 2137px; top: 1066px; color: #a9abad; opacity: .85; pointer-events: none; }
.watermark p { margin: 0; font-size: 40px; line-height: 57px; letter-spacing: .9px; white-space: nowrap; }
.watermark p + p { font-size: 29px; line-height: 40px; letter-spacing: 1.100px; }

.taskbar { height: 80px; flex: none; background: #010308; display: flex; color: #fff; }
.start { width: 96px; padding: 24px 32px; }
.start svg { width: 32px; }
.search { width: 688px; background: linear-gradient(#f4f4f4, #e2e2e2); border-top: 2px solid #b9bbbd; display: flex; align-items: center; padding: 0 30px 0 20px; color: #2b2b2b; font-size: 28px; }
.search i { width: 40px; height: 40px; border: 5px solid #0a0a0a; border-radius: 50%; }
.search span { margin-left: 20px; }
.search svg { width: 22px; margin-left: auto; fill: none; stroke: #1e1e1e; stroke-width: 2; }
.views { width: 40px; height: 28px; margin: 26px 0 0 28px; fill: none; stroke: #fff; stroke-width: 2; }
.tasks { display: flex; margin-left: 34px; }
.task { width: 96px; height: 80px; margin-right: 2px; display: flex; justify-content: center; padding-top: 20px; position: relative; }
.task svg { width: 40px; height: 40px; }
.task::after { content: ""; position: absolute; left: 8px; right: 8px; bottom: 0; height: 4px; background: #76b0e2; }
.task.multi::after { background: linear-gradient(90deg, #76b0e2 62px, #3f617e 62px 63px, #5a8ab2 63px); }
.task.active { background: #484a4c; }
.task.active::after { left: 0; right: 0; }
.tray { margin-left: auto; display: flex; align-items: center; }
.tray svg { fill: none; stroke: #fff; stroke-width: 2; }
.tray > i { width: 2px; height: 80px; background: #6e6f71; margin: 0 8px 0 39px; }
.clock { width: 112px; margin-left: 25px; display: flex; flex-direction: column; text-align: center; font-size: 24px; line-height: 38px; letter-spacing: .3px; align-items: center; }

.behind { height: 106px; flex: none; position: relative; z-index: 0; background: linear-gradient(#202c42, #1b2440); }
.backpane { position: absolute; left: 142px; right: 0; top: 0; height: 42px; background: linear-gradient(90deg, #979797 374px, #808080 374px 376px, #979797 376px 391px, #8b8b8b 391px, #909090 97%, #cfcfcf); overflow: hidden; box-shadow: 0 2px #b9bcc6, 0 14px #e1e1e1; }
.btn { position: absolute; top: -40px; height: 56px; border: 2px solid #777; border-radius: 5px; font-size: 26px; color: #222; text-align: center; line-height: 62px; }
.blue { left: 406px; width: 148px; background: #2b4f7b; border-color: #254468; color: #b6bcc4; padding-right: 42px; }
.blue u { position: absolute; right: 43px; top: 0; width: 2px; height: 54px; background: #1f3d62; }
.b2 { left: 570px; width: 132px; } .b3 { left: 718px; width: 108px; }

.dock { position: absolute; left: 37px; top: 24px; width: 2615px; height: 73px; border: 2px solid #979ead; border-radius: 20px; background: linear-gradient(#868c9c, #767c8f); display: flex; padding-left: 3px; }
.slot { width: 54.300px; flex: none; height: 69px; position: relative; display: flex; justify-content: center; align-items: flex-start; padding-top: 11px; }
.slot > svg { width: 40px; height: 40px; filter: drop-shadow(0 1px 1px #0004); }
.slot > i { position: absolute; left: 50%; margin-left: -3px; bottom: 3px; width: 6px; height: 6px; border-radius: 50%; background: #04041a; }
.dock hr { width: 2px; height: 52px; margin: 8px 11px 0 13px; border: 0; background: #4c5160; flex: none; }
.dock hr ~ hr { margin: 8px 10px 0 12px; }
.thumb { flex: none; margin-top: 20px; transform: translateY(-50%); background: #f7f7f7; border: 1px solid #d8d8d8; display: flex; justify-content: center; align-items: center; overflow: hidden; }
.thumb b { font: 900 8px/12px "Noto Sans CJK SC", sans-serif; color: #111; padding-left: 8px; }
.slot .badge { position: absolute; width: 16px; height: 16px; left: 34px; top: 38px; }
.blank { background: #e9e9e9; }
.split { background: repeating-linear-gradient(#fff0 0 3px, #ffffffb0 3px 5px), linear-gradient(90deg, #ddd 22%, #fff 22% 50%, #d9d9d9 50% 75%, #f3f3f3 75%); }
.list { background: linear-gradient(#e4e4e4 3px, #fff0 3px), repeating-linear-gradient(#fff0 0 3px, #ffffffa0 3px 5px), linear-gradient(90deg, #dcdcdc 24%, #fff 24% 40%, #dde3ea 40% 55%, #fff 55%); }
.book { background: linear-gradient(90deg, #dcdcdc 20%, #fff 20%); }
.api { background: linear-gradient(#f1e8e4 3px, #fff0 3px), repeating-linear-gradient(#fff0 0 4px, #fffc 4px 7px), linear-gradient(90deg, #f2dcd6 14%, #fff 14% 36%, #dfe4ee 36% 75%, #fff 75%); }
.code { background: linear-gradient(#e4e4e4 6px, #fff0 6px), linear-gradient(90deg, #fff 4%, #8fc8f7 4% 24%, #fff 24%); }
.web { background: linear-gradient(#eadede 4px, #fff 4px); }
.tall { background: linear-gradient(#1f55b5 4px, #fff0 4px 41px, #2467d8 41px 44px, #fff 44px), linear-gradient(90deg, #fff 2px, #fff0 2px), repeating-linear-gradient(#fff 0 3px, #fff0 3px 5px), linear-gradient(90deg, #4d9ae0 14%, #fff 14% 80%, #aaa 80%); }
</style>
